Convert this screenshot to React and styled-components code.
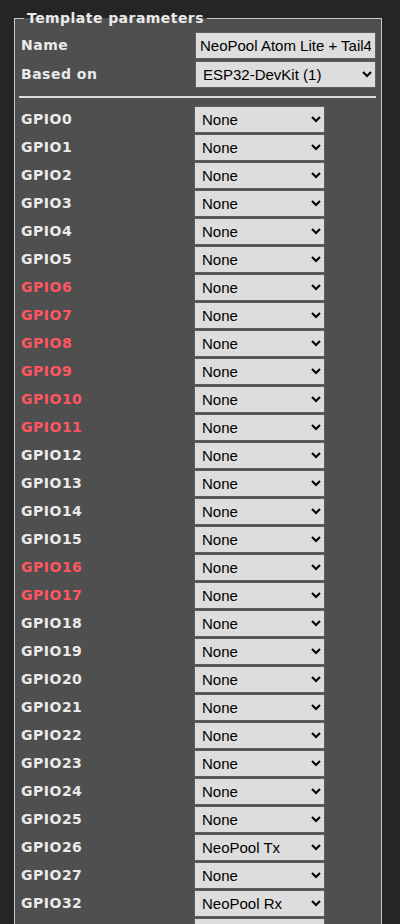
import React from 'react'
import styled, { createGlobalStyle } from 'styled-components'

const GlobalStyle = createGlobalStyle`
  html, body {
    margin: 0;
    padding: 0;
    background: #252525;
  }
  body {
    font-family: "DejaVu Sans", Verdana, sans-serif;
    color: #eaeaea;
  }
`

const Page = styled.div`
  padding: 10px 18px 0 14px;
`

const Fieldset = styled.fieldset`
  margin: 0;
  padding: 5px 5px 10px 5px;
  background: #4f4f4f;
  border: 1px solid #c8c8c8;
  min-width: 0;
`

const Legend = styled.legend`
  padding: 0 3px;
  margin-left: 4px;
  font-size: 14px;
  font-weight: bold;
  letter-spacing: 0.45px;
  line-height: 16px;
  color: #eaeaea;
`

const HeadRow = styled.div`
  display: grid;
  grid-template-columns: 175px 1fr;
  align-items: center;
  height: 28px;
  margin-top: ${p => p.$top || 0}px;
`

const Label = styled.b`
  font-size: 14px;
  font-weight: bold;
  letter-spacing: 0.5px;
  padding-left: 1px;
  color: ${p => (p.$warn ? '#ff5661' : '#eaeaea')};
`

const TextInput = styled.input`
  box-sizing: border-box;
  width: 100%;
  height: 27px;
  padding: 3px 4px;
  font-family: "Liberation Sans", Arial, sans-serif;
  font-size: 15px;
  color: #000;
  background: #dddddd;
  border: 1px solid #5e5e5e;
  border-radius: 0;
  outline: none;
`

const Select = styled.select`
  box-sizing: border-box;
  width: ${p => p.$w || '100%'};
  height: 27px;
  padding: 2px 3px;
  font-family: "Liberation Sans", Arial, sans-serif;
  font-size: 15px;
  color: #000;
  background: #dddddd;
  border: 1px solid #5e5e5e;
  border-radius: 0;
`

const Rule = styled.hr`
  margin: 8px 0 7px -1px;
  border: 0;
  border-top: 2px solid #dcdcdc;
`

const GpioRow = styled.div`
  display: grid;
  grid-template-columns: 174px 131px;
  align-items: center;
  height: 28px;
`

const pins = [0, 1, 2, 3, 4, 5, 6, 7, 8, 9, 10, 11, 12, 13, 14, 15, 16, 17, 18, 19, 20, 21, 22, 23, 24, 25, 26, 27, 32, 33, 34, 35, 36, 39]
const warn = [6, 7, 8, 9, 10, 11, 16, 17]
const assigned = { 26: 'NeoPool Tx', 32: 'NeoPool Rx' }

export default function App() {
  return (
    <Page>
      <GlobalStyle />
      <Fieldset>
        <Legend>Template parameters</Legend>
        <HeadRow>
          <Label>Name</Label>
          <TextInput defaultValue="NeoPool Atom Lite + Tail485" />
        </HeadRow>
        <HeadRow $top={1}>
          <Label>Based on</Label>
          <Select defaultValue="ESP32-DevKit (1)">
            <option>ESP32-DevKit (1)</option>
          </Select>
        </HeadRow>
        <Rule />
        {pins.map(n => {
          const value = assigned[n] || 'None'
          return (
            <GpioRow key={n}>
              <Label $warn={warn.includes(n)}>GPIO{n}</Label>
              <Select $w="131px" defaultValue={value}>
                <option>None</option>
                <option>NeoPool Tx</option>
                <option>NeoPool Rx</option>
              </Select>
            </GpioRow>
          )
        })}
      </Fieldset>
    </Page>
  )
}
